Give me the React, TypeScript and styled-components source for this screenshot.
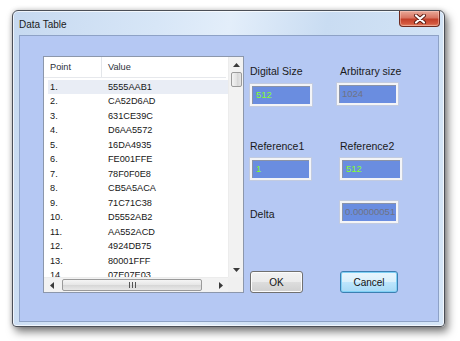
import styled, { createGlobalStyle } from "styled-components"

const Global = createGlobalStyle`
  html, body { margin: 0; padding: 0; background: #ffffff; }
  body { font-family: "Liberation Sans", Arial, sans-serif; }
`

const Page = styled.div`
  padding: 10px 0 0 12px;
  width: 460px;
  height: 341px;
  box-sizing: border-box;
  overflow: hidden;
`

const Window = styled.div`
  width: 433px;
  height: 317px;
  box-sizing: border-box;
  border: 1px solid #4b4f57;
  border-radius: 6px 6px 4px 4px;
  background: linear-gradient(100deg, #c6d9f0 0%, #d7e6f7 30%, #e3eefa 45%, #c9dcf2 65%, #d6e6f7 100%);
  box-shadow: 3px 5px 9px rgba(0, 0, 0, 0.5), 0 0 5px rgba(0, 0, 0, 0.2), inset 0 0 0 1px rgba(255, 255, 255, 0.7);
  display: flex;
  flex-direction: column;
  padding: 0 5px 4px 6px;
`

const TitleBar = styled.div`
  height: 24px;
  display: flex;
  align-items: flex-start;
  justify-content: space-between;
`

const Title = styled.span`
  font-size: 10px;
  color: #1b1b1b;
  line-height: 12px;
  margin-top: 8px;
`

const CloseBtn = styled.div`
  width: 41px;
  height: 16px;
  box-sizing: border-box;
  margin-right: -1px;
  border: 1px solid #6e2a1f;
  border-top: none;
  border-radius: 0 0 4px 4px;
  background: linear-gradient(#e9a998 0%, #d87562 45%, #c3402a 55%, #d4593f 85%, #e58a6c 100%);
  display: flex;
  align-items: center;
  justify-content: center;
  box-shadow: inset 0 0 0 1px rgba(255, 210, 200, 0.45);
`

const Client = styled.div`
  flex: 1;
  border: 1px solid #8ea2c6;
  background: #b5c8f3;
  display: flex;
  align-items: flex-start;
  gap: 6px;
  padding: 20px 0 0 23px;
`

const ListBox = styled.div`
  width: 201px;
  height: 237px;
  box-sizing: border-box;
  border: 1px solid #8c97ab;
  background: #ffffff;
  display: grid;
  grid-template-columns: 1fr 15px;
  grid-template-rows: 1fr 15px;
  font-size: 9.2px;
  color: #161616;
`

const Content = styled.div`
  overflow: hidden;
  padding-left: 4px;
`

const Header = styled.div`
  height: 20px;
  display: grid;
  grid-template-columns: 54px 1fr;
  border-bottom: 1px solid #e6e8ec;
  margin-left: -4px;
  padding-left: 4px;
  margin-right: 2px;
`

const HeadCell = styled.div<{ $first?: boolean }>`
  display: flex;
  align-items: center;
  padding-left: ${(p) => (p.$first ? "2px" : "6px")};
  border-right: ${(p) => (p.$first ? "1px solid #e3e6ea" : "none")};
  color: #2a2f3a;
`

const Rows = styled.div`
  padding-top: 1.5px;
`

const Row = styled.div<{ $selected?: boolean }>`
  height: 14.5px;
  display: grid;
  grid-template-columns: 58px 1fr;
  align-items: center;
  background: ${(p) => (p.$selected ? "#e9edf5" : "transparent")};
`

const Cell = styled.div`
  padding-left: 2px;
  white-space: nowrap;
`

const VScroll = styled.div`
  background: #f2f2f2;
  border-left: 1px solid #ececec;
  display: flex;
  flex-direction: column;
  align-items: center;
`

const Arrow = styled.div`
  height: 15px;
  width: 100%;
  display: flex;
  align-items: center;
  justify-content: center;
`

const VThumb = styled.div`
  width: 11px;
  height: 15px;
  box-sizing: border-box;
  border: 1px solid #9a9a9a;
  border-radius: 2px;
  background: linear-gradient(90deg, #f3f3f3, #e2e2e2 50%, #d3d3d3 51%, #e6e6e6);
`

const HScroll = styled.div`
  background: #f2f2f2;
  border-top: 1px solid #ececec;
  display: flex;
  align-items: center;
`

const HArrow = styled.div`
  width: 15px;
  height: 100%;
  display: flex;
  align-items: center;
  justify-content: center;
`

const HThumb = styled.div`
  width: 140px;
  height: 12px;
  margin-left: 3px;
  box-sizing: border-box;
  border: 1px solid #9a9a9a;
  border-radius: 2px;
  background: linear-gradient(#f5f5f5, #e6e6e6 50%, #d6d6d6 51%, #e8e8e8);
  display: flex;
  align-items: center;
  justify-content: center;
`

const Track = styled.div`
  flex: 1;
`

const Corner = styled.div`
  background: #f0f0f0;
`

const Panel = styled.div`
  display: flex;
  flex-direction: column;
  padding-top: 9px;
`

const Line = styled.div<{ $top: number }>`
  display: grid;
  grid-template-columns: 90px 1fr;
  margin-top: ${(p) => p.$top}px;
`

const Field = styled.div`
  display: flex;
  flex-direction: column;
  align-items: flex-start;
`

const Label = styled.span<{ $drop?: number }>`
  font-size: 10.5px;
  line-height: 13px;
  color: #1a1a1a;
  margin-top: ${(p) => p.$drop ?? 0}px;
`

const Box = styled.div<{ $w: number; $shift?: number; $mt?: number; $disabled?: boolean }>`
  width: ${(p) => p.$w}px;
  height: 22px;
  box-sizing: border-box;
  margin-left: ${(p) => p.$shift ?? 0}px;
  margin-top: ${(p) => p.$mt ?? 0}px;
  border: 2px solid #f3f4f7;
  outline: 1px solid #c2cbe0;
  background: #6a8de0;
  box-shadow: inset 1px 1px 0 #8a93a8;
  display: flex;
  align-items: center;
  padding-left: ${(p) => (p.$disabled ? "3px" : "4px")};
  font-size: 9.5px;
  line-height: 12px;
  color: ${(p) => (p.$disabled ? "#6f7384" : "#86ff2e")};
  overflow: hidden;
  white-space: nowrap;
`

const Button = styled.div<{ $focused?: boolean; $w: number }>`
  width: ${(p) => p.$w}px;
  height: 22px;
  box-sizing: border-box;
  border: 1px solid ${(p) => (p.$focused ? "#3c7fb1" : "#707070")};
  border-radius: 3px;
  background: ${(p) =>
    p.$focused
      ? "linear-gradient(#eaf6fd 0%, #d9f0fc 50%, #bee6fd 51%, #a7d9f5 100%)"
      : "linear-gradient(#f2f2f2 0%, #ebebeb 50%, #dddddd 51%, #cfcfcf 100%)"};
  box-shadow: inset 0 0 0 1px ${(p) => (p.$focused ? "#7fd0f5" : "#fcfcfc")};
  display: flex;
  align-items: center;
  justify-content: center;
  font-size: 10px;
  color: #111;
`

const values = [
  "5555AAB1",
  "CA52D6AD",
  "631CE39C",
  "D6AA5572",
  "16DA4935",
  "FE001FFE",
  "78F0F0E8",
  "CB5A5ACA",
  "71C71C38",
  "D5552AB2",
  "AA552ACD",
  "4924DB75",
  "80001FFF",
  "07E07E03",
]

function Tri({ dir }: { dir: "up" | "down" | "left" | "right" }) {
  const pts = {
    up: "0,4 3.5,0 7,4",
    down: "0,0 3.5,4 7,0",
    left: "4,0 0,3.5 4,7",
    right: "0,0 4,3.5 0,7",
  }[dir]
  const w = dir === "up" || dir === "down" ? 7 : 4
  const h = dir === "up" || dir === "down" ? 4 : 7
  return (
    <svg width={w} height={h} viewBox={`0 0 ${w} ${h}`}>
      <polygon points={pts} fill="#3a3a3a" />
    </svg>
  )
}

function App() {
  return (
    <Page>
      <Global />
      <Window>
        <TitleBar>
          <Title>Data Table</Title>
          <CloseBtn>
            <svg width="14" height="10" viewBox="0 0 14 10">
              <path d="M3 1.5 L11 8.5 M11 1.5 L3 8.5" stroke="#5a1a10" strokeWidth="4" strokeLinecap="round" />
              <path d="M3 1.5 L11 8.5 M11 1.5 L3 8.5" stroke="#ffffff" strokeWidth="2.2" strokeLinecap="round" />
            </svg>
          </CloseBtn>
        </TitleBar>
        <Client>
          <ListBox>
            <Content>
              <Header>
                <HeadCell $first>Point</HeadCell>
                <HeadCell>Value</HeadCell>
              </Header>
              <Rows>
                {values.map((v, i) => (
                  <Row key={v} $selected={i === 0}>
                    <Cell>{i + 1}.</Cell>
                    <Cell>{v}</Cell>
                  </Row>
                ))}
              </Rows>
            </Content>
            <VScroll>
              <Arrow><Tri dir="up" /></Arrow>
              <VThumb />
              <Track />
              <Arrow><Tri dir="down" /></Arrow>
            </VScroll>
            <HScroll>
              <HArrow><Tri dir="left" /></HArrow>
              <HThumb>
                <svg width="7" height="6" viewBox="0 0 7 6">
                  <path d="M0.5 0 V6 M3.5 0 V6 M6.5 0 V6" stroke="#555" strokeWidth="1" />
                </svg>
              </HThumb>
              <Track />
              <HArrow><Tri dir="right" /></HArrow>
            </HScroll>
            <Corner />
          </ListBox>
          <Panel>
            <Line $top={0}>
              <Field>
                <Label>Digital Size</Label>
                <Box $w={62} $mt={6}>512</Box>
              </Field>
              <Field>
                <Label>Arbitrary size</Label>
                <Box $w={61} $mt={5} $shift={-3} $disabled>1024</Box>
              </Field>
            </Line>
            <Line $top={34}>
              <Field>
                <Label>Reference1</Label>
                <Box $w={61} $mt={5}>1</Box>
              </Field>
              <Field>
                <Label>Reference2</Label>
                <Box $w={62} $mt={5}>512</Box>
              </Field>
            </Line>
            <Line $top={21}>
              <Field>
                <Label $drop={7}>Delta</Label>
              </Field>
              <Field>
                <Box $w={58} $disabled>0.00000051</Box>
              </Field>
            </Line>
            <Line $top={48}>
              <Button $w={53}>OK</Button>
              <Button $w={58} $focused>Cancel</Button>
            </Line>
          </Panel>
        </Client>
      </Window>
    </Page>
  )
}

export default App
